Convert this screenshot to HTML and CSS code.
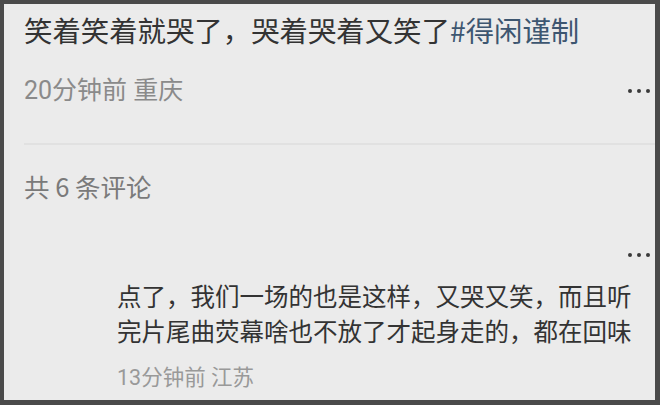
FILE: index.html
```html
<!DOCTYPE html>
<html lang="zh-CN">
<head>
    <meta charset="UTF-8">
    <meta name="viewport" content="width=device-width, initial-scale=1.0">
    <title>评论</title>
    <link rel="stylesheet" href="styles.css">
</head>
<body>
    <div class="frame">
        <div class="post">
            <div class="post-text">笑着笑着就哭了，哭着哭着又笑了<span class="tag">#得闲谨制</span></div>
            <div class="meta-row">
                <span class="meta">20分钟前 重庆</span>
                <span class="more"><i></i><i></i><i></i></span>
            </div>
        </div>
        <div class="divider"></div>

        <div class="comments">
            <div class="count">共 6 条评论</div>
            <div class="more-row"><span class="more"><i></i><i></i><i></i></span></div>
            <div class="comment">
                <div class="comment-text">点了，我们一场的也是这样，又哭又笑，而且听<br>完片尾曲荧幕啥也不放了才起身走的，都在回味</div>
                <div class="comment-meta">13分钟前 江苏</div>
            </div>
        </div>
    </div>
</body>
</html>
```

FILE: styles.css
```css
html, body {
    margin: 0;
    height: 100%;
}
body {
    background: #4a4a4a;
    padding: 4px 5px 5px 4px;
    box-sizing: border-box;
    font-family: "Noto Sans CJK SC", "Noto Sans", sans-serif;
}
.frame {
    background: #ebebeb;
    height: 100%;
    overflow: hidden;
}
.post {
    padding: 7px 5px 0 20px;
    height: 132px;
}
.post-text {
    font-size: 28.4px;
    line-height: 38px;
    color: #333;
}
.tag {
    color: #3d5670;
}
.meta-row {
    display: flex;
    justify-content: space-between;
    align-items: center;
    margin-top: 27px;
    height: 30px;
}
.meta {
    font-size: 25px;
    line-height: 30px;
    color: #8a8a8a;
    font-family: Roboto, "Noto Sans CJK SC", sans-serif;
}
.more {
    display: flex;
    gap: 5px;
}
.more i {
    display: block;
    width: 4px;
    height: 4px;
    border-radius: 50%;
    background: #3a3a3a;
}
.divider {
    height: 2px;
    margin-left: 20px;
    background: #e1e1e1;
}
.comments {
    padding: 0 5px 0 20px;
}
.count {
    font-size: 25.5px;
    line-height: 34px;
    color: #7a7a7a;
    margin-top: 24px;
}
.more-row {
    display: flex;
    justify-content: flex-end;
    align-items: center;
    height: 10px;
    margin-top: 47px;
}
.comment {
    padding-left: 93px;
    margin-top: 18px;
}
.comment-text {
    font-size: 24.5px;
    line-height: 35px;
    color: #333;
}
.comment-meta {
    font-size: 21.5px;
    line-height: 28px;
    color: #999;
    margin-top: 16px;
    font-family: Roboto, "Noto Sans CJK SC", sans-serif;
}
```
